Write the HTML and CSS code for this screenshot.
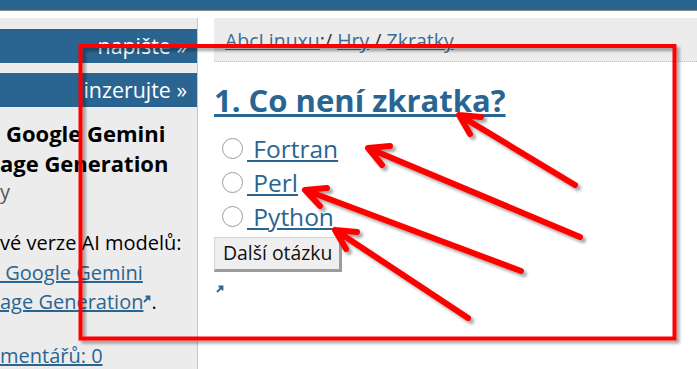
FILE: index.html
```html
<!DOCTYPE html>
<html lang="cs">
<head>
  <meta charset="UTF-8" />
  <title>Zkratky | AbcLinuxu</title>
  <link rel="stylesheet" href="styles.css">
</head>
<body>

<div class="topbar"></div>

<div class="layout">
  <!-- Left column -->
  <aside class="sidebar">
    <a class="promo" href="#">napište »</a>
    <a class="promo" href="#">inzerujte »</a>

    <div class="news">
      <h2 class="news-title"><span class="indent">Google Gemini</span><br>age Generation</h2>
      <div class="news-meta">y</div>
      <p class="news-text">vé verze AI modelů:<br><a href="#">&nbsp;Google Gemini</a><br><a href="#">age Generation</a><svg class="ext" viewBox="0 0 8 8"><path d="M1 7 L6 2 M2.5 1.5 H6.5 V5.5" /></svg>.</p>
      <p class="news-comments"><a href="#">mentářů: 0</a></p>
    </div>
  </aside>

  <!-- Main column -->
  <main class="content">
    <div class="crumbs">
      <a href="#">AbcLinuxu</a>:/ <a href="#">Hry</a> / <a href="#">Zkratky</a>
    </div>

    <h1 class="question"><a href="#">1. Co není zkratka?</a></h1>

    <form class="quiz">
      <label class="option"><input type="radio" name="answer"><a href="#">&nbsp;Fortran</a></label>
      <label class="option"><input type="radio" name="answer"><a href="#">&nbsp;Perl</a></label>
      <label class="option"><input type="radio" name="answer"><a href="#">&nbsp;Python</a></label>
      <button type="button" class="next-btn">Další otázku</button>
    </form>

    <a class="ext-link" href="#"><svg class="ext" viewBox="0 0 8 8"><path d="M1 7 L6 2 M2.5 1.5 H6.5 V5.5" /></svg></a>
  </main>
</div>

<!-- Red markup drawn over the screenshot -->
<svg class="markup" width="697" height="369" viewBox="0 0 697 369">
  <defs>
    <filter id="shadow" x="-10%" y="-10%" width="120%" height="120%">
      <feDropShadow dx="3" dy="3" stdDeviation="1.6" flood-color="#000" flood-opacity="0.35" />
    </filter>
  </defs>
  <g filter="url(#shadow)" fill="none" stroke="#ff0000" stroke-linecap="round" stroke-linejoin="round">
    <rect x="80.5" y="46" width="594" height="292.5" stroke-width="4" stroke-linejoin="miter" />
    <path stroke-width="6" d="M575 185 L459 115 M470 134 L459 115 L481 117" />
    <path stroke-width="6" d="M580 237 L368 148 M382 165 L368 148 L390 146" />
    <path stroke-width="6" d="M521 271 L305 190 M320 206 L305 190 L327 188" />
    <path stroke-width="6" d="M468 318 L335 230 M346 249 L335 230 L357 232" />
  </g>
</svg>

</body>
</html>
```

FILE: styles.css
```css
body {
  margin: 0;
  font-family: 'Open Sans', 'Noto Sans', sans-serif;
  background: #fff;
  color: #000;
  overflow: hidden;
}
a {
  color: #2a6592;
}
.topbar {
  height: 10px;
  background: #2a6592;
  border-bottom: 1px solid #8a8a8a;
}
.layout {
  display: flex;
  margin-top: 7px;
  height: 360px;
}
.sidebar {
  width: 197px;
  flex-shrink: 0;
  background: #ececec;
  border-right: 1px solid #c8c8c8;
  padding-top: 11px;
  overflow: hidden;
}
.promo {
  display: block;
  height: 34px;
  line-height: 33px;
  margin-bottom: 10px;
  padding-right: 10px;
  background: #2a6592;
  color: #fff;
  text-align: right;
  font-size: 21.4px;
  text-decoration: none;
}
.news {
  margin-top: 11px;
  font-size: 20px;
}
.news-title {
  margin: 0;
  font-size: 22px;
  font-weight: bold;
  line-height: 30px;
}
.indent {
  padding-left: 6px;
}
.news-meta {
  color: #555;
  line-height: 28px;
}
.news-text {
  margin: 22px 0 0;
  line-height: 29.5px;
}
.news-comments {
  margin: 24px 0 0;
  line-height: 30px;
}
.ext {
  width: 8px;
  height: 8px;
  fill: none;
  stroke: #2a6592;
  stroke-width: 1.8;
  vertical-align: 6px;
}
.content {
  flex: 1;
  padding-left: 16px;
}
.crumbs {
  height: 43px;
  padding-left: 11px;
  background: #ececec;
  border-bottom: 1px dotted #bcbcbc;
  font-size: 19.5px;
  line-height: 45px;
  color: #333;
}
.crumbs a {
  color: #3c6d92;
}
.question {
  margin: 18px 0 0;
  font-size: 31px;
  line-height: 40px;
}
.quiz {
  margin-top: 11px;
}
.option {
  display: flex;
  align-items: center;
  height: 34px;
  font-size: 24.5px;
}
.option input {
  appearance: none;
  width: 21px;
  height: 21px;
  margin: 1px 4px 0 8px;
  border: 1px solid #9a9aa4;
  border-radius: 50%;
  background: #fff;
}
.next-btn {
  display: block;
  margin-top: 4px;
  height: 35px;
  padding: 0 7px 2px 8px;
  font-family: inherit;
  font-size: 19.4px;
  color: #111;
  background: #efefef;
  border-style: solid;
  border-width: 1px 3px 3px 1px;
  border-color: #d4d4d4 #9c9c9c #9c9c9c #d4d4d4;
}
.ext-link {
  display: block;
  margin: 13px 0 0 2px;
  line-height: 10px;
}
.markup {
  position: fixed;
  top: 0;
  left: 0;
  pointer-events: none;
}
```
